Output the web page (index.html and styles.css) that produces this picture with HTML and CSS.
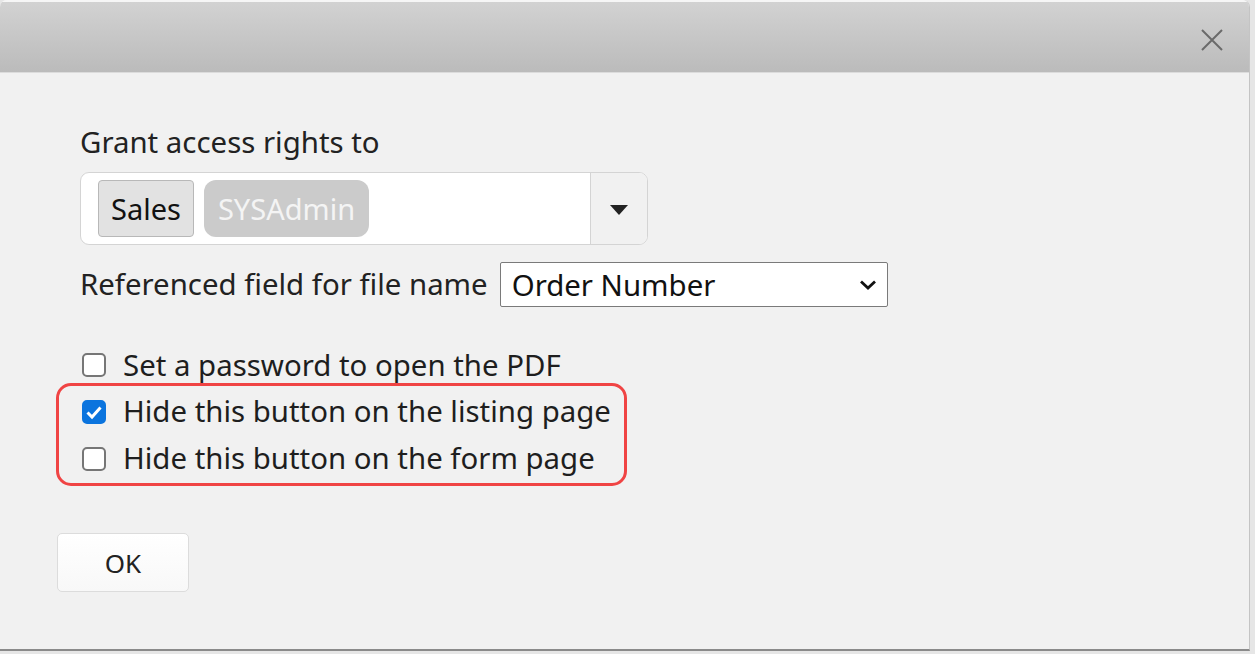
FILE: index.html
```html
<!DOCTYPE html>
<html>
<head>
<meta charset="utf-8">
<link rel="stylesheet" href="styles.css">
</head>
<body>
<div class="dialog">
  <div class="header">
    <button class="close" aria-label="Close">
      <svg width="24" height="24" viewBox="0 0 24 24"><path d="M2 2 L22 22 M22 2 L2 22" stroke="#6a6a6a" stroke-width="2" fill="none"/></svg>
    </button>
  </div>
  <div class="body">
    <div class="label">Grant access rights to</div>
    <div class="multi">
      <div class="tags">
        <span class="tag tag-sales">Sales</span>
        <span class="tag tag-admin">SYSAdmin</span>
      </div>
      <div class="multi-arrow"><span class="tri"></span></div>
    </div>
    <div class="field-row">
      <span class="label">Referenced field for file name</span>
      <div class="select">
        <span>Order Number</span>
        <svg class="chev" width="18" height="12" viewBox="0 0 18 12"><path d="M2 2.5 L9 9 L16 2.5" stroke="#111" stroke-width="2.8" fill="none"/></svg>
      </div>
    </div>
    <div class="check-row first">
      <span class="box"></span>
      <span class="ctext">Set a password to open the PDF</span>
    </div>
    <div class="highlight">
      <div class="check-row">
        <span class="box checked"><svg width="24" height="24" viewBox="0 0 24 24"><path d="M5.5 12.5 L10 17 L18.5 7.5" stroke="#fff" stroke-width="3" fill="none"/></svg></span>
        <span class="ctext">Hide this button on the listing page</span>
      </div>
      <div class="check-row">
        <span class="box"></span>
        <span class="ctext">Hide this button on the form page</span>
      </div>
    </div>
    <button class="ok">OK</button>
  </div>
</div>
</body>
</html>
```

FILE: styles.css
```css
html, body {
  margin: 0;
  padding: 0;
  background: #e6e6e6;
}
body {
  width: 1255px;
  height: 654px;
  overflow: hidden;
  font-family: "Noto Sans", "Open Sans", sans-serif;
  color: #222;
}
.dialog {
  width: 1249px;
  height: 649px;
  background: #f1f1f1;
  border-radius: 7px 7px 0 0;
  border-right: 1px solid #c4c4c4;
  border-bottom: 2px solid #8a8a8a;
  box-sizing: content-box;
  overflow: hidden;
  display: flex;
  flex-direction: column;
}
.header {
  height: 73px;
  border-top: 2px solid #f6f6f6;
  background: linear-gradient(#d2d2d2, #bbbbbb);
  border-bottom: 1px solid #dcdcdc;
  display: flex;
  justify-content: flex-end;
  align-items: center;
  padding-right: 25px;
  box-sizing: border-box;
}
.close {
  border: 0;
  background: none;
  padding: 0;
  width: 24px;
  height: 24px;
  margin-top: 6px;
}
.body {
  padding: 51px 0 0 80px;
  display: flex;
  flex-direction: column;
  align-items: flex-start;
}
.label {
  font-size: 29.4px;
  line-height: 37px;
  color: #222;
  white-space: nowrap;
}
.multi {
  margin-top: 11px;
  width: 568px;
  height: 73px;
  box-sizing: border-box;
  border: 1px solid #d4d4d4;
  border-radius: 9px;
  background: #fff;
  display: flex;
  overflow: hidden;
}
.tags {
  flex: 1;
  display: flex;
  align-items: center;
  gap: 10px;
  padding-left: 17px;
}
.tag {
  height: 57px;
  box-sizing: border-box;
  display: flex;
  align-items: center;
  font-size: 29px;
}
.tag-sales {
  width: 96px;
  justify-content: center;
  background: #e2e2e2;
  border: 1px solid #b8b8b8;
  border-radius: 4px;
  color: #111;
}
.tag-admin {
  width: 165px;
  justify-content: center;
  background: #cbcbcb;
  border-radius: 12px;
  color: #f4f4f4;
}
.multi-arrow {
  width: 56px;
  background: #f1f1f1;
  border-left: 1px solid #d4d4d4;
  display: flex;
  align-items: center;
  justify-content: center;
}
.tri {
  width: 0;
  height: 0;
  border-left: 9px solid transparent;
  border-right: 9px solid transparent;
  border-top: 10px solid #222;
  margin-top: 2px;
}
.field-row {
  margin-top: 17px;
  display: flex;
  align-items: center;
  gap: 12px;
}
.select {
  width: 388px;
  height: 45px;
  box-sizing: border-box;
  border: 1px solid #7a7a7a;
  border-radius: 2px;
  background: #fff;
  display: flex;
  align-items: center;
  justify-content: space-between;
  padding: 0 10px 0 11px;
  font-size: 29.4px;
  color: #111;
}
.chev {
  display: block;
}
.check-row {
  display: flex;
  align-items: center;
  gap: 17px;
  height: 47px;
  padding-left: 2px;
}
.check-row.first {
  margin-top: 40px;
  height: 36px;
}
.box {
  width: 24px;
  height: 24px;
  box-sizing: border-box;
  border: 2px solid #767676;
  border-radius: 5px;
  background: #fff;
  flex: none;
  display: flex;
}
.box.checked {
  background: #0b74de;
  border-color: #0b74de;
}
.box.checked svg {
  margin: -2px;
}
.ctext {
  font-size: 29.4px;
  line-height: 37px;
  color: #1e1e1e;
  white-space: nowrap;
}
.highlight {
  margin-left: -24px;
  padding: 2px 10px 1px 21px;
  width: 571px;
  box-sizing: border-box;
  border: 3px solid #f04444;
  border-radius: 15px;
}
.ok {
  margin-top: 47px;
  margin-left: -23px;
  width: 132px;
  height: 59px;
  background: linear-gradient(#ffffff, #f8f8f8);
  border: 1px solid #dcdcdc;
  border-radius: 5px;
  font-family: "Noto Sans", "Open Sans", sans-serif;
  font-size: 26px;
  color: #222;
}
```
